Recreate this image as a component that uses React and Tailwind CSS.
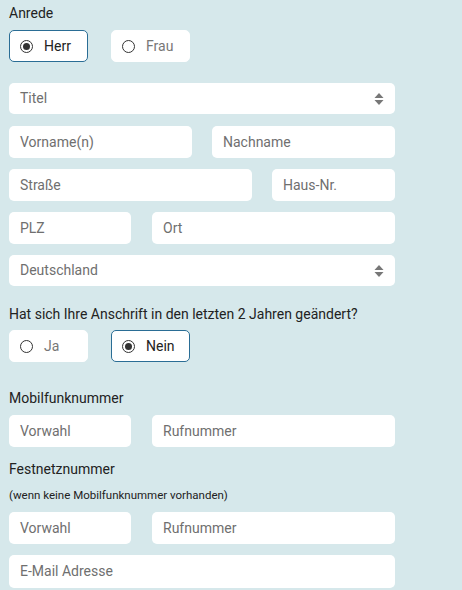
import React from 'react';

const font = { fontFamily: 'Roboto, "Liberation Sans", sans-serif' };

function Radio({ label, checked }) {
  return (
    <div
      className={`flex h-[32px] w-[79px] items-center rounded-[5px] bg-white pl-[10px] ${
        checked ? 'border border-[#2a6d95]' : 'border border-white'
      }`}
    >
      <span className="flex h-[13px] w-[13px] items-center justify-center rounded-full border border-[#333]">
        {checked && <span className="h-[7px] w-[7px] rounded-full bg-[#333]" />}
      </span>
      <span className={`ml-[11px] text-[14px] ${checked ? 'text-[#222]' : 'text-[#777]'}`}>{label}</span>
    </div>
  );
}

function Field({ placeholder, className = '' }) {
  return (
    <div className={`flex h-[32px] items-center rounded-[5px] bg-white pl-[11px] text-[14px] text-[#6f6f6f] ${className}`}>
      {placeholder}
    </div>
  );
}

function Select({ placeholder }) {
  return (
    <div className="flex h-[31px] items-center justify-between rounded-[5px] bg-white pl-[11px] pr-[11px] text-[14px] text-[#6f6f6f]">
      <span>{placeholder}</span>
      <svg width="10" height="14" viewBox="0 0 10 14" className="text-[#777]">
        <path d="M5 1 L9.5 6 H0.5 Z" fill="currentColor" />
        <path d="M5 13 L9.5 8 H0.5 Z" fill="currentColor" />
      </svg>
    </div>
  );
}

export default function App() {
  return (
    <div className="min-h-[590px] w-[462px] bg-[#d6e8eb] pl-[9px] pt-[5px]" style={font}>
      <div className="w-[386px]">
        <p className="text-[14px] leading-[17px] text-[#222]">Anrede</p>
        <div className="mt-[8px] flex gap-[23px]">
          <Radio label="Herr" checked />
          <Radio label="Frau" />
        </div>

        <div className="mt-[21px]">
          <Select placeholder="Titel" />
        </div>
        <div className="mt-[12px] flex gap-[20px]">
          <Field placeholder="Vorname(n)" className="flex-1" />
          <Field placeholder="Nachname" className="flex-1" />
        </div>
        <div className="mt-[11px] flex gap-[20px]">
          <Field placeholder="Straße" className="w-[243px]" />
          <Field placeholder="Haus-Nr." className="flex-1" />
        </div>
        <div className="mt-[11px] flex gap-[21px]">
          <Field placeholder="PLZ" className="w-[122px]" />
          <Field placeholder="Ort" className="flex-1" />
        </div>
        <div className="mt-[11px]">
          <Select placeholder="Deutschland" />
        </div>

        <p className="mt-[20px] text-[14px] leading-[17px] text-[#222]">
          Hat sich Ihre Anschrift in den letzten 2 Jahren geändert?
        </p>
        <div className="mt-[7px] flex gap-[23px]">
          <Radio label="Ja" />
          <Radio label="Nein" checked />
        </div>

        <p className="mt-[28px] text-[14px] leading-[17px] text-[#222]">Mobilfunknummer</p>
        <div className="mt-[8px] flex gap-[21px]">
          <Field placeholder="Vorwahl" className="w-[122px]" />
          <Field placeholder="Rufnummer" className="flex-1" />
        </div>

        <p className="mt-[14px] text-[14px] leading-[17px] text-[#222]">Festnetznummer</p>
        <p className="mt-[10px] text-[11.5px] leading-[14px] text-[#222]">(wenn keine Mobilfunknummer vorhanden)</p>
        <div className="mt-[10px] flex gap-[21px]">
          <Field placeholder="Vorwahl" className="w-[122px]" />
          <Field placeholder="Rufnummer" className="flex-1" />
        </div>
        <div className="mt-[11px]">
          <Field placeholder="E-Mail Adresse" className="h-[33px]" />
        </div>
      </div>
    </div>
  );
}
